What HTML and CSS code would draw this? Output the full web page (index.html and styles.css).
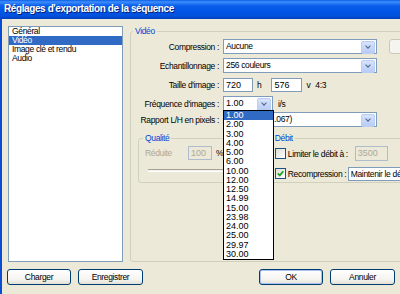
FILE: index.html
```html
<!DOCTYPE html>
<html lang="fr">
<head>
  <meta charset="UTF-8">
  <title>Réglages d'exportation de la séquence</title>
  <link rel="stylesheet" href="styles.css">
</head>
<body>
<div class="window">
  <div class="titlebar">Réglages d'exportation de la séquence</div>
  <div class="client">
    <div class="main">
      <ul class="navlist">
        <li>Général</li>
        <li class="sel">Vidéo</li>
        <li>Image clé et rendu</li>
        <li>Audio</li>
      </ul>
      <fieldset class="group video">
        <legend>Vidéo</legend>
        <div class="row">
          <span class="lbl">Compression :</span>
          <div class="combo wide"><span>Aucune</span><i class="arrow"></i></div>
          <div class="ghost"></div>
        </div>
        <div class="row">
          <span class="lbl">Echantillonnage :</span>
          <div class="combo wide"><span>256 couleurs</span><i class="arrow"></i></div>
        </div>
        <div class="row">
          <span class="lbl">Taille d'image :</span>
          <div class="field num w720">720</div>
          <span class="unit-h">h</span>
          <div class="field num w576">576</div>
          <span class="unit-v">v</span>
          <span class="ratio">4:3</span>
        </div>
        <div class="row">
          <span class="lbl">Fréquence d'images :</span>
          <div class="combo fps">
            <span class="num">1.00</span><i class="arrow"></i>
            <!-- liste ouverte -->
            <div class="droplist">
              <div class="hl">1.00</div>
              <div>2.00</div>
              <div>3.00</div>
              <div>4.00</div>
              <div>5.00</div>
              <div>6.00</div>
              <div>10.00</div>
              <div>12.00</div>
              <div>12.50</div>
              <div>14.99</div>
              <div>15.00</div>
              <div>23.98</div>
              <div>24.00</div>
              <div>25.00</div>
              <div>29.97</div>
              <div>30.00</div>
            </div>
          </div>
          <span class="unit-fps">i/s</span>
        </div>
        <div class="row r-ratio">
          <span class="lbl">Rapport L/H en pixels :</span>
          <div class="combo wide"><span>D1/DV PAL (1.067)</span><i class="arrow"></i></div>
        </div>
        <div class="groups">
          <fieldset class="group quality">
            <legend>Qualité</legend>
            <div class="q-row">
              <span class="q-lbl">Réduite</span>
              <div class="field num off w100">100</div>
              <span class="pct">%</span>
            </div>
            <div class="slider"></div>
          </fieldset>
          <fieldset class="group rate">
            <legend>Débit</legend>
            <div class="d-row">
              <label class="chk lim"><span class="check"></span>Limiter le débit à :</label>
              <div class="field num off w3500">3500</div>
            </div>
            <div class="d-row second">
              <label class="chk rec"><span class="check on"><svg width="7" height="7" viewBox="0 0 7 7"><path d="M0.8 3.4 L2.8 5.4 L6.3 1.2" stroke="#21a121" stroke-width="1.7" fill="none"/></svg></span>Recompression :</label>
              <div class="combo keep"><span>Maintenir le débit</span></div>
            </div>
          </fieldset>
        </div>
      </fieldset>
    </div>
    <div class="footer">
      <div class="btns">
        <button class="btn">Charger</button>
        <button class="btn w65">Enregistrer</button>
      </div>
      <div class="btns">
        <button class="btn default">OK</button>
        <button class="btn w65">Annuler</button>
      </div>
    </div>
  </div>
</div>
</body>
</html>
```

FILE: styles.css
```css
body {
  margin: 0;
  width: 400px;
  height: 294px;
  overflow: hidden;
  background: #ECE9D8;
  font-family: "Liberation Sans", Arial, sans-serif;
  font-size: 8.5px;
  letter-spacing: -0.35px;
  color: #000;
}
.window {
  display: flex;
  flex-direction: column;
  height: 294px;
}
.titlebar {
  flex: none;
  height: 19px;
  line-height: 17px;
  padding-left: 4px;
  color: #fff;
  font-weight: bold;
  font-size: 10px;
  letter-spacing: -0.4px;
  white-space: nowrap;
  text-shadow: 1px 1px 0 #0A1E78;
  background: linear-gradient(to bottom, #0A5FE6 0%, #3C8EFC 10%, #0B5DEB 30%, #0055E6 60%, #0050DC 85%, #003DB8 100%);
}
.client {
  flex: 1;
  min-width: 0;
  display: flex;
  flex-direction: column;
  overflow: hidden;
  border-left: 2px solid #0A4BD6;
  padding: 7px 5px 0;
}
.main {
  display: flex;
  height: 236px;
}
.navlist {
  flex: none;
  list-style: none;
  margin: 0 0 0 1px;
  padding: 0;
  width: 115px;
  box-sizing: border-box;
  border: 1px solid #7F9DB9;
  background: #fff;
}
.navlist li {
  height: 9px;
  line-height: 9px;
  padding-left: 3px;
  white-space: nowrap;
}
.navlist li.sel {
  background: #316AC5;
  color: #fff;
}

/* group boxes */
.group {
  margin: 0;
  padding: 0;
  min-width: 0;
  box-sizing: border-box;
  border: 1px solid #D0D0BF;
  border-radius: 3px;
}
.group legend {
  padding: 0 2px;
  line-height: 10px;
  color: #0046D5;
}
.video {
  flex: none;
  width: 290px;
  margin-left: 7px;
  padding-top: 3px;
}
.video > legend { margin-left: 2px; }
.row {
  display: flex;
  align-items: center;
  height: 15px;
  margin-top: 4px;
  white-space: nowrap;
}
.row > *, .q-row > *, .d-row > * { flex: none; }
.video > .row:first-of-type { margin-top: 0; }
.row.r-ratio { margin-top: 1px; }
.lbl {
  width: 88px;
  margin-right: 4px;
  text-align: right;
}
.num {
  font-family: "Liberation Sans", Arial, sans-serif;
  font-size: 9px;
  letter-spacing: 0;
}

/* combo box */
.combo {
  position: relative;
  height: 15px;
  box-sizing: border-box;
  border: 1px solid #7F9DB9;
  background: #fff;
  padding-left: 2px;
  line-height: 13px;
  white-space: nowrap;
}
.combo > span { display: block; overflow: hidden; margin-right: 14px; }
.combo.wide { width: 154px; }
.combo.fps { width: 50px; }
.arrow {
  position: absolute;
  top: 1px;
  right: 1px;
  width: 12px;
  height: 11px;
  border: 1px solid #BACDF5;
  border-radius: 2px;
  background: linear-gradient(to bottom, #D7E3FD, #B8CCF6);
}
.arrow::after {
  content: "";
  position: absolute;
  left: 3.5px;
  top: 2px;
  width: 3px;
  height: 3px;
  border-right: 1.6px solid #4D6185;
  border-bottom: 1.6px solid #4D6185;
  transform: rotate(45deg);
}
.ghost {
  width: 40px;
  height: 15px;
  margin-left: 12px;
  box-sizing: border-box;
  border: 1px solid #CAC8BB;
  border-radius: 3px;
  background: #F5F4EF;
}
.droplist {
  position: absolute;
  left: -1px;
  top: 13px;
  width: 51px;
  box-sizing: border-box;
  border: 1px solid #000;
  background: #fff;
  z-index: 5;
}
.droplist div {
  height: 9.25px;
  line-height: 9.25px;
  padding-left: 2px;
  font-family: "Liberation Sans", Arial, sans-serif;
  font-size: 9px;
  letter-spacing: 0;
}
.droplist .hl {
  background: #316AC5;
  color: #fff;
}
.unit-fps { margin-left: 5px; }

/* text fields */
.field {
  height: 14px;
  box-sizing: border-box;
  border: 1px solid #7F9DB9;
  background: #fff;
  padding-left: 2px;
  line-height: 12px;
}
.w720 { width: 30px; }
.w576 { width: 31px; margin-left: 10px; }
.unit-h { margin-left: 4px; }
.unit-v { margin-left: 4px; }
.ratio { margin-left: 5px; }
.field.off {
  background: #ECE9D8;
  border-color: #AFBCCB;
  color: #ACA899;
}

/* Qualité / Débit */
.groups {
  display: flex;
  margin-top: 6px;
  margin-left: 7px;
  height: 50px;
}
.quality { width: 135px; }
.quality legend { margin-left: 4px; }
.rate { width: 160px; margin-left: 4px; }
.rate legend { margin-left: 3px; }
.q-row {
  display: flex;
  align-items: center;
  margin-top: 3px;
  padding-left: 6px;
  color: #ACA899;
}
.q-lbl { width: 43px; }
.w100 { width: 24px; }
.pct { margin-left: 4px; color: #000; }
.slider {
  margin: 9px 0 0 9px;
  width: 118px;
  height: 3px;
  box-sizing: border-box;
  border-top: 1px solid #A5A293;
  border-bottom: 1px solid #fff;
  background: #F3F2EC;
}
.d-row {
  display: flex;
  align-items: center;
  height: 15px;
  margin-top: 3px;
  padding-left: 5px;
  white-space: nowrap;
}
.d-row.second { margin-top: 5px; }
.chk {
  display: flex;
  align-items: center;
}
.chk.lim { width: 80px; }
.chk.rec { width: 73px; }
.check {
  flex: none;
  width: 11px;
  height: 11px;
  margin-right: 2px;
  box-sizing: border-box;
  border: 1px solid #1C5180;
  background: linear-gradient(135deg, #DCDCD7, #fff);
  display: flex;
  align-items: center;
  justify-content: center;
}
.w3500 { width: 33px; height: 15px; }
.combo.keep { width: 100px; height: 14px; line-height: 12px; }
.combo.keep > span { margin-right: 0; }

/* footer */
.footer {
  display: flex;
  justify-content: space-between;
  margin-top: 7px;
}
.btns {
  display: flex;
  gap: 7px;
}
.btn {
  width: 64px;
  height: 16px;
  box-sizing: border-box;
  padding: 0;
  border: 1px solid #003C74;
  border-radius: 3px;
  background: linear-gradient(to bottom, #fff, #F4F3EE 70%, #E2DFD4);
  font-family: inherit;
  font-size: 8.5px;
  letter-spacing: -0.35px;
  color: #000;
}
.btn.w65 { width: 65px; }
.btn.default { box-shadow: inset 0 0 0 1px #A9C2EF; }
```
